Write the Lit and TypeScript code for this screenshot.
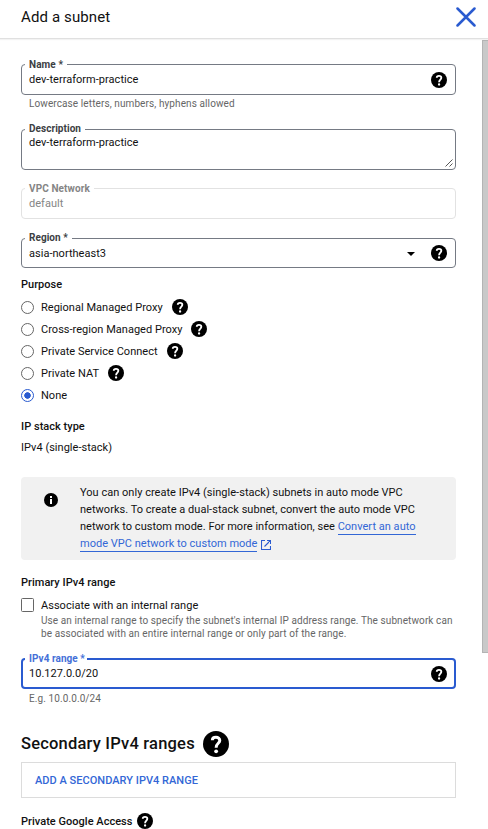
import { LitElement, html, css, nothing } from "lit";
import { customElement, property } from "lit/decorators.js";

@customElement("help-icon")
class HelpIcon extends LitElement {
  static styles = css`
    :host { display: block; flex: none; width: 16px; height: 16px; }
    svg { display: block; width: 100%; height: 100%; }
  `;
  render() {
    return html`<svg viewBox="2 2 20 20">
      <circle cx="12" cy="12" r="10"/>
      <path d="M9.200 9.200C9.200 7.700 10.400 6.900 12 6.900S14.900 7.900 14.900 9.300C14.900 11.500 12.100 11.500 12.100 14.800" fill="none" stroke="#fff" stroke-width="2.300"/>
      <circle cx="12.100" cy="17.600" r="1.450" fill="#fff"/>
    </svg>`;
  }
}

@customElement("outlined-field")
class OutlinedField extends LitElement {
  @property() label = "";
  @property() value = "";
  @property() kind = "text";
  static styles = css`
    :host { display: block; box-sizing: border-box; height: 31px; }
    .box {
      position: relative; display: flex; align-items: center; box-sizing: border-box; height: 100%;
      border: 1px solid #757a84; border-radius: 4px; padding: 0 8px 0 7px;
    }
    .label {
      position: absolute; left: 3px; top: -7.500px; padding: 0 4px; background: #fff;
      font-size: 10px; line-height: 14px; font-weight: 700; color: #3c4043; letter-spacing: .1px; white-space: nowrap;
    }
    .value { flex: 1; line-height: 16px; white-space: nowrap; }
    .area { align-items: flex-start; }
    .area .value { padding-top: 5px; }
    .select .value { padding-top: 2px; }
    .area .label, .select .label { top: -8px; letter-spacing: .05px; }
    .disabled { border-color: #e2e2e2; }
    .disabled .label, .disabled .value { color: #858585; }
    .focus { border: 2px solid #2a5bd0; padding: 0 7px 0 6px; }
    .focus .label { left: 2px; top: -8.500px; padding-right: 2px; color: #4470d8; letter-spacing: .05px; }
    .arrow { width: 8px; height: 4px; margin: 1px 16.500px 0 0; }
    .select help-icon { margin-bottom: 1px; }
    .grip { position: absolute; right: 2px; bottom: 2px; width: 8px; height: 8px; }
  `;
  render() {
    const k = this.kind;
    return html`<div class="box ${k}">
      <span class="label">${this.label}</span><span class="value">${this.value}</span>
      ${k === "select" ? html`<svg class="arrow" viewBox="0 0 8 4"><path d="M0 0h8L4 4z"/></svg>` : nothing}
      ${k === "area" ? html`<svg class="grip" viewBox="0 0 8 8"><path d="M.5 7.500l7-7M4.500 7.500l3-3" stroke="#444" stroke-width=".9"/></svg>` : nothing}
      ${k === "area" || k === "disabled" ? nothing : html`<help-icon></help-icon>`}
    </div>`;
  }
}

const purposes = [
  { name: "Regional Managed Proxy", cls: "p1" },
  { name: "Cross-region Managed Proxy", cls: "p2" },
  { name: "Private Service Connect", cls: "p3" },
  { name: "Private NAT", cls: "p4" },
  { name: "None", cls: "p5" },
];

@customElement("app-root")
class AppRoot extends LitElement {
  static styles = css`
    :host {
      display: flex; flex-direction: column; height: 829px; overflow: hidden; background: #fff; color: #111;
      font-family: Roboto, sans-serif; font-size: 11px; letter-spacing: .025px;
    }
    header {
      flex: none; display: flex; align-items: center; justify-content: space-between; box-sizing: border-box;
      height: 39px; padding: 0 12px 5px 21px; border-bottom: 1px solid #e0e0e0; box-shadow: 0 1px 1px #f3f3f3;
    }
    .title { font-size: 15px; line-height: 20px; letter-spacing: .12px; }
    .close { width: 20px; height: 20px; }
    .body { flex: 1; display: flex; min-height: 0; }
    main { flex: 1; min-width: 0; padding: 25px 26px 0 21px; }
    .track { flex: none; width: 6px; padding-top: 1px; }
    .thumb { box-sizing: border-box; height: 613px; background: #c9c9c9; border: 1px solid #b4b4b4; border-right: 0; }
    .hint { padding-left: 8px; font-size: 10px; line-height: 14px; color: #666; letter-spacing: .1px; }
    .h1 { margin-top: 2px; }
    .desc { height: 41px; margin-top: 18px; }
    .vpc { margin-top: 18px; }
    .region { height: 30px; margin-top: 19px; }
    .strong { font-weight: 500; line-height: 16px; }
    .purpose { margin-top: 9px; margin-bottom: 3px; }
    .row { display: flex; align-items: center; height: 22px; }
    .radio { box-sizing: border-box; width: 13px; height: 13px; border: 1px solid #666; border-radius: 50%; margin-right: 7px; }
    .p5 .radio { border-color: #2a5bd0; background: radial-gradient(circle, #2a5bd0 2.900px, #fff 3.600px); }
    .row help-icon { margin-left: 9px; }
    .p1 help-icon { margin-bottom: 1px; }
    .stack { margin-top: 13px; }
    .stackval { margin-top: 5px; line-height: 16px; }
    .info { display: flex; box-sizing: border-box; height: 83px; margin-top: 21px; border-radius: 4px; background: #f1f1f1; padding: 7px 0 0 23px; }
    .infoicon { flex: none; width: 14px; height: 14px; margin: 9px 22px 0 0; }
    .msg { line-height: 17px; white-space: nowrap; }
    .link { color: #3367d6; border-bottom: 1px solid #3367d6; padding-bottom: 1px; }
    .ext { width: 10px; height: 10px; margin-left: 4px; vertical-align: -3px; }
    .primary { margin-top: 15px; }
    .check { box-sizing: border-box; width: 13px; height: 14px; border: 1px solid #666; border-radius: 1.500px; margin-right: 7px; }
    .assoc { height: 16px; margin-top: 6px; }
    .sub { padding-left: 20px; margin-top: 1px; font-size: 10px; line-height: 13px; color: #666; letter-spacing: .09px; white-space: nowrap; }
    .range { margin-top: 18px; }
    .h2 { margin-top: 3px; }
    .secondary { display: flex; align-items: center; height: 26px; margin-top: 25px; font-size: 16.500px; font-weight: 500; letter-spacing: .2px; }
    .secondary span { margin-bottom: 2px; }
    .secondary help-icon { width: 26px; height: 26px; margin-left: 8px; }
    .add { display: flex; align-items: center; box-sizing: border-box; height: 36px; margin-top: 5px; padding-left: 13px; border: 1px solid #dcdcdc; color: #3367d6; font-weight: 500; }
    .pga { display: flex; align-items: center; margin-top: 15px; font-weight: 500; }
    .pga help-icon { margin-left: 5px; }
  `;
  render() {
    return html`
      <header>
        <span class="title">Add a subnet</span>
        <svg class="close" viewBox="0 0 20 20"><path d="M1.500 1.500l17 17M18.500 1.500l-17 17" stroke="#2a5bd0" stroke-width="2.500" stroke-linecap="round"/></svg>
      </header>
      <div class="body">
        <main>
          <outlined-field label="Name *" value="dev-terraform-practice"></outlined-field>
          <div class="hint h1">Lowercase letters, numbers, hyphens allowed</div>
          <outlined-field class="desc" kind="area" label="Description" value="dev-terraform-practice"></outlined-field>
          <outlined-field class="vpc" kind="disabled" label="VPC Network" value="default"></outlined-field>
          <outlined-field class="region" kind="select" label="Region *" value="asia-northeast3"></outlined-field>
          <div class="strong purpose">Purpose</div>
          ${purposes.map((p) => html`<div class="row ${p.cls}"><span class="radio"></span><span>${p.name}</span>${p.cls === "p5" ? nothing : html`<help-icon></help-icon>`}</div>`)}
          <div class="strong stack">IP stack type</div>
          <div class="stackval">IPv4 (single-stack)</div>
          <div class="info">
            <svg class="infoicon" viewBox="0 0 14 14"><circle cx="7" cy="7" r="7"/><path d="M6 3h2v2H6zM6 6h2v5H6z" fill="#fff"/></svg>
            <div class="msg">
              You can only create IPv4 (single-stack) subnets in auto mode VPC<br>networks. To create a dual-stack subnet, convert the auto mode VPC<br>network to custom mode. For more information, see <span class="link">Convert an auto</span><br><span class="link">mode VPC network to custom mode</span><svg class="ext" viewBox="0 0 10 10"><path d="M4 .5H.5v9h9V6M6 .5h3.500V4M9.500.5L3.500 6.500" fill="none" stroke="#2a5bd0" stroke-width="1.100"/></svg>
            </div>
          </div>
          <div class="strong primary">Primary IPv4 range</div>
          <div class="row assoc"><span class="check"></span><span>Associate with an internal range</span></div>
          <div class="sub">Use an internal range to specify the subnet's internal IP address range. The subnetwork can<br>be associated with an entire internal range or only part of the range.</div>
          <outlined-field class="range" kind="focus" label="IPv4 range *" value="10.127.0.0/20"></outlined-field>
          <div class="hint h2">E.g. 10.0.0.0/24</div>
          <div class="secondary"><span>Secondary IPv4 ranges</span><help-icon></help-icon></div>
          <div class="add">ADD A SECONDARY IPV4 RANGE</div>
          <div class="pga"><span>Private Google Access</span><help-icon></help-icon></div>
        </main>
        <div class="track"><div class="thumb"></div></div>
      </div>
    `;
  }
}
